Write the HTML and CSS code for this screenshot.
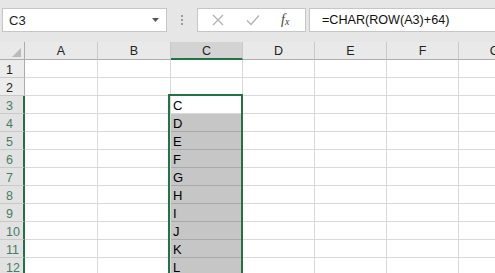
FILE: index.html
```html
<!DOCTYPE html>
<html>
<head>
<meta charset="utf-8">
<link rel="stylesheet" href="styles.css">
</head>
<body>
<div class="app">
  <div class="fbar">
    <div class="namebox"><span>C3</span><svg class="dd" width="7" height="4" viewBox="0 0 7 4"><path d="M0 0H7L3.5 4Z" fill="#555"/></svg></div>
    <div class="grip"><i></i><i></i><i></i></div>
    <div class="fxbtns">
      <svg class="bx" width="12" height="12" viewBox="0 0 12 12"><path d="M1 1L11 11M11 1L1 11" stroke="#b4b4b4" stroke-width="1.4" fill="none"/></svg>
      <svg class="bc" width="14" height="12" viewBox="0 0 14 12"><path d="M1 6.5L5 10.5L13 1.5" stroke="#b4b4b4" stroke-width="1.5" fill="none"/></svg>
      <span class="fx">f<sub>x</sub></span>
    </div>
    <div class="formula">=CHAR(ROW(A3)+64)</div>
  </div>
  <div class="sheet">
    <div class="grid">
      <div class="hd corner"><span class="tri"></span></div>
      <div class="hd col">A</div><div class="hd col">B</div><div class="hd col sel">C</div><div class="hd col">D</div><div class="hd col">E</div><div class="hd col">F</div><div class="hd col">G</div>

      <div class="rh">1</div><div class="c"></div><div class="c"></div><div class="c"></div><div class="c"></div><div class="c"></div><div class="c"></div><div class="c"></div>
      <div class="rh">2</div><div class="c"></div><div class="c"></div><div class="c"></div><div class="c"></div><div class="c"></div><div class="c"></div><div class="c"></div>
      <div class="rh rs">3</div><div class="c"></div><div class="c"></div><div class="c act">C</div><div class="c"></div><div class="c"></div><div class="c"></div><div class="c"></div>
      <div class="rh rs">4</div><div class="c"></div><div class="c"></div><div class="c fill">D</div><div class="c"></div><div class="c"></div><div class="c"></div><div class="c"></div>
      <div class="rh rs">5</div><div class="c"></div><div class="c"></div><div class="c fill">E</div><div class="c"></div><div class="c"></div><div class="c"></div><div class="c"></div>
      <div class="rh rs">6</div><div class="c"></div><div class="c"></div><div class="c fill">F</div><div class="c"></div><div class="c"></div><div class="c"></div><div class="c"></div>
      <div class="rh rs">7</div><div class="c"></div><div class="c"></div><div class="c fill">G</div><div class="c"></div><div class="c"></div><div class="c"></div><div class="c"></div>
      <div class="rh rs">8</div><div class="c"></div><div class="c"></div><div class="c fill">H</div><div class="c"></div><div class="c"></div><div class="c"></div><div class="c"></div>
      <div class="rh rs">9</div><div class="c"></div><div class="c"></div><div class="c fill">I</div><div class="c"></div><div class="c"></div><div class="c"></div><div class="c"></div>
      <div class="rh rs">10</div><div class="c"></div><div class="c"></div><div class="c fill">J</div><div class="c"></div><div class="c"></div><div class="c"></div><div class="c"></div>
      <div class="rh rs">11</div><div class="c"></div><div class="c"></div><div class="c fill">K</div><div class="c"></div><div class="c"></div><div class="c"></div><div class="c"></div>
      <div class="rh rs">12</div><div class="c"></div><div class="c"></div><div class="c fill">L</div><div class="c"></div><div class="c"></div><div class="c"></div><div class="c"></div>
    </div>
    <div class="selbox"></div>
  </div>
</div>
</body>
</html>
```
FILE: styles.css
```css
html, body {
  margin: 0;
  padding: 0;
  overflow: hidden;
  background: #ffffff;
}
.app {
  width: 495px;
  height: 273px;
  overflow: hidden;
  font-family: "Liberation Sans", Arial, sans-serif;
  color: #000;
}
.fbar {
  height: 42px;
  box-sizing: border-box;
  background: #e6e6e6;
  display: flex;
  align-items: flex-start;
  padding: 8px 0 0 2px;
}
.namebox {
  width: 165px;
  height: 24px;
  box-sizing: border-box;
  border: 1px solid #c6c6c6;
  background: #fff;
  display: flex;
  align-items: center;
  justify-content: space-between;
  padding: 1px 7px 0 6px;
  font-size: 13px;
  color: #222;
}
.namebox .dd {
  margin-top: -1px;
}
.grip {
  width: 30px;
  height: 24px;
  display: flex;
  flex-direction: column;
  align-items: center;
  justify-content: center;
  gap: 2px;
}
.grip i {
  display: block;
  width: 2px;
  height: 2px;
  background: #9a9a9a;
}
.fxbtns {
  width: 109px;
  height: 24px;
  box-sizing: border-box;
  border: 1px solid #c6c6c6;
  background: #fff;
  display: flex;
  align-items: center;
  padding-left: 14px;
}
.bx { margin-right: 22px; }
.bc { margin-right: 21px; }
.fx {
  font-family: "Liberation Serif", "Times New Roman", serif;
  font-style: italic;
  font-size: 14px;
  color: #444;
}
.fx sub {
  font-size: 10px;
  vertical-align: -1px;
}
.formula {
  flex: 1;
  margin-left: 3px;
  height: 24px;
  box-sizing: border-box;
  border: 1px solid #c6c6c6;
  border-right: none;
  background: #fff;
  font-size: 12.6px;
  line-height: 23px;
  padding-left: 12px;
  color: #111;
  white-space: nowrap;
}
.sheet {
  position: relative;
}
.grid {
  display: grid;
  grid-template-columns: 25px 73px 73px 72px 72px 72px 72px 72px;
  grid-auto-rows: 18px;
  width: 531px;
}
.grid > div {
  box-sizing: border-box;
}
.hd {
  background: #e9e9e9;
  border-right: 1px solid #c9c9c9;
  border-bottom: 1px solid #acacac;
  font-size: 12.5px;
  text-align: center;
  line-height: 19px;
  color: #222;
}
.corner {
  position: relative;
  border-right: 1px solid #acacac;
}
.tri {
  position: absolute;
  right: 3px;
  bottom: 2px;
  width: 0;
  height: 0;
  border-left: 9px solid transparent;
  border-bottom: 9px solid #b9b9b9;
}
.hd.sel {
  background: #d3d3d3;
  border-bottom: 2px solid #217346;
  color: #1f1f1f;
}
.rh {
  background: #ececec;
  border-right: 1px solid #acacac;
  border-bottom: 1px solid #c9c9c9;
  font-size: 12.5px;
  line-height: 20px;
  padding-left: 6px;
  color: #222;
}
.rh.rs {
  background: #e2e2e2;
  color: #4a7c62;
  border-right: 2px solid #217346;
}
.c {
  border-right: 1px solid #d9d9d9;
  border-bottom: 1px solid #d9d9d9;
  font-size: 13px;
  line-height: 20px;
  padding-left: 2px;
  white-space: nowrap;
}
.c.fill {
  background: #c6c6c6;
  border-bottom-color: #a9a9a9;
}
.selbox {
  position: absolute;
  left: 168px;
  top: 52px;
  width: 75px;
  height: 240px;
  box-sizing: border-box;
  border: 2px solid #217346;
  pointer-events: none;
}
```
